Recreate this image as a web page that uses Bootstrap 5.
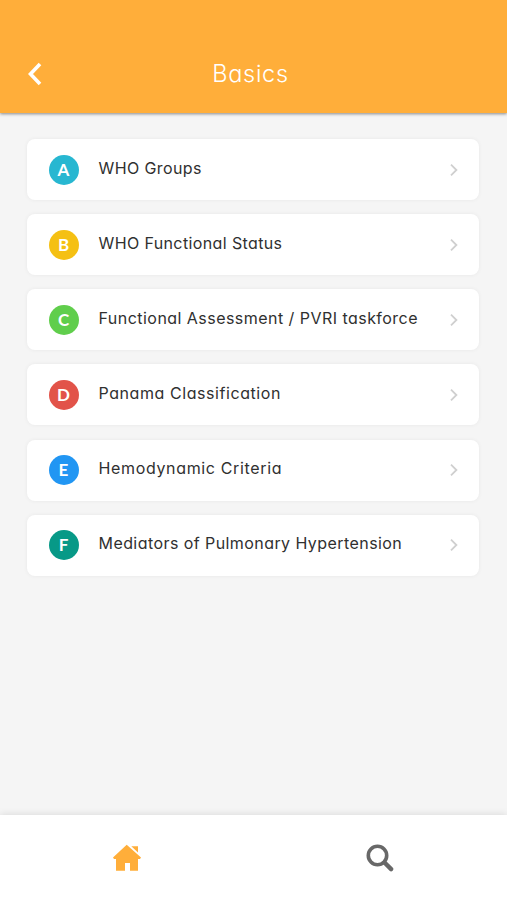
<!DOCTYPE html>
<html lang="en">
<head>
<meta charset="utf-8">
<meta name="viewport" content="width=device-width, initial-scale=1">
<title>Basics</title>
<link href="https://cdn.jsdelivr.net/npm/bootstrap@5.3.0/dist/css/bootstrap.min.css" rel="stylesheet">
<style>
body{font-family:Inter,"Open Sans",sans-serif;font-feature-settings:"cv11" 1,"ss03" 1;background:#f5f5f5;color:#303030}
.app-header{height:113px;padding:35px 28px 0;background:#ffae3a;box-shadow:0 1px 3px rgba(0,0,0,.45)}
.app-title{font-size:23.5px;font-weight:350;letter-spacing:.7px;line-height:36px;margin-right:20px}
.back-btn{width:14px}
.topics{padding:26px 28px 0 27px;gap:14.15px}
.topic{--bs-list-group-color:#303030;height:61px;padding:0 20px 0 21.5px;border:0;border-radius:8px!important;box-shadow:0 0 4px rgba(0,0,0,.06)}
.letter{width:30px;height:30px;font:700 17px/30px Lato,sans-serif;margin-right:20px}
.label{font-size:16px;line-height:24px;padding-bottom:4px;white-space:nowrap}
.c-a{background:#27b7d1}.c-b{background:#f5c013}.c-c{background:#60ce4c}.c-d{background:#e25349}.c-e{background:#2196f3}.c-f{background:#079987}
.s-a{letter-spacing:.4px}.s-b{letter-spacing:.38px}.s-c{letter-spacing:.46px}.s-d{letter-spacing:.57px}.s-e{letter-spacing:.65px}.s-f{letter-spacing:.43px}
.tabs{height:85px;box-shadow:0 -1px 7px rgba(0,0,0,.1)}
</style>
<script src="https://cdn.jsdelivr.net/npm/bootstrap@5.3.0/dist/js/bootstrap.bundle.min.js" defer></script>
</head>
<body class="d-flex flex-column vh-100 overflow-hidden">
<header class="app-header d-flex align-items-center text-white">
  <a href="#" class="back-btn text-white d-flex" aria-label="Back"><svg width="14" height="24" viewBox="0 0 14 24" fill="none" stroke="currentColor" stroke-width="3.6"><path d="M12 2 2.5 12 12 22"/></svg></a>
  <h1 class="app-title flex-grow-1 text-center mb-0">Basics</h1>
</header>
<main class="topics list-group flex-grow-1">
  <a href="#" class="topic list-group-item d-flex align-items-center"><span class="letter c-a rounded-circle text-white text-center">A</span><span class="label s-a">WHO Groups</span><svg class="ms-auto" width="10" height="14" viewBox="0 0 10 14" fill="none" stroke="#cfcfcf" stroke-width="1.8"><path d="m2 1.7 5.4 5.3L2 12.3"/></svg></a>
  <a href="#" class="topic list-group-item d-flex align-items-center"><span class="letter c-b rounded-circle text-white text-center">B</span><span class="label s-b">WHO Functional Status</span><svg class="ms-auto" width="10" height="14" viewBox="0 0 10 14" fill="none" stroke="#cfcfcf" stroke-width="1.8"><path d="m2 1.7 5.4 5.3L2 12.3"/></svg></a>
  <a href="#" class="topic list-group-item d-flex align-items-center"><span class="letter c-c rounded-circle text-white text-center">C</span><span class="label s-c">Functional Assessment / PVRI taskforce</span><svg class="ms-auto" width="10" height="14" viewBox="0 0 10 14" fill="none" stroke="#cfcfcf" stroke-width="1.8"><path d="m2 1.7 5.4 5.3L2 12.3"/></svg></a>
  <a href="#" class="topic list-group-item d-flex align-items-center"><span class="letter c-d rounded-circle text-white text-center">D</span><span class="label s-d">Panama Classification</span><svg class="ms-auto" width="10" height="14" viewBox="0 0 10 14" fill="none" stroke="#cfcfcf" stroke-width="1.8"><path d="m2 1.7 5.4 5.3L2 12.3"/></svg></a>
  <a href="#" class="topic list-group-item d-flex align-items-center"><span class="letter c-e rounded-circle text-white text-center">E</span><span class="label s-e">Hemodynamic Criteria</span><svg class="ms-auto" width="10" height="14" viewBox="0 0 10 14" fill="none" stroke="#cfcfcf" stroke-width="1.8"><path d="m2 1.7 5.4 5.3L2 12.3"/></svg></a>
  <a href="#" class="topic list-group-item d-flex align-items-center"><span class="letter c-f rounded-circle text-white text-center">F</span><span class="label s-f">Mediators of Pulmonary Hypertension</span><svg class="ms-auto" width="10" height="14" viewBox="0 0 10 14" fill="none" stroke="#cfcfcf" stroke-width="1.8"><path d="m2 1.7 5.4 5.3L2 12.3"/></svg></a>
</main>
<nav class="tabs d-flex bg-white flex-shrink-0">
  <a href="#" class="d-flex w-50 align-items-center justify-content-center" aria-label="Home"><svg width="28" height="28" viewBox="0 0 28 28" fill="#ffae3a"><path d="M13.7.8 28 13.5l-1 1.5h-2v11.8h-8v-7.9h-5v7.9H3V15H1l-1-1.5z"/><path d="M18.3 2.2H25v6.2z"/></svg></a>
  <a href="#" class="d-flex w-50 align-items-center justify-content-center" aria-label="Search"><svg width="28" height="28" viewBox="0 0 28 28" fill="none" stroke="#686868"><circle cx="11.5" cy="11.5" r="9.2" stroke-width="3.6"/><path d="m18.5 18.5 6.6 6.6" stroke-width="4.4" stroke-linecap="round"/></svg></a>
</nav>
</body>
</html>
